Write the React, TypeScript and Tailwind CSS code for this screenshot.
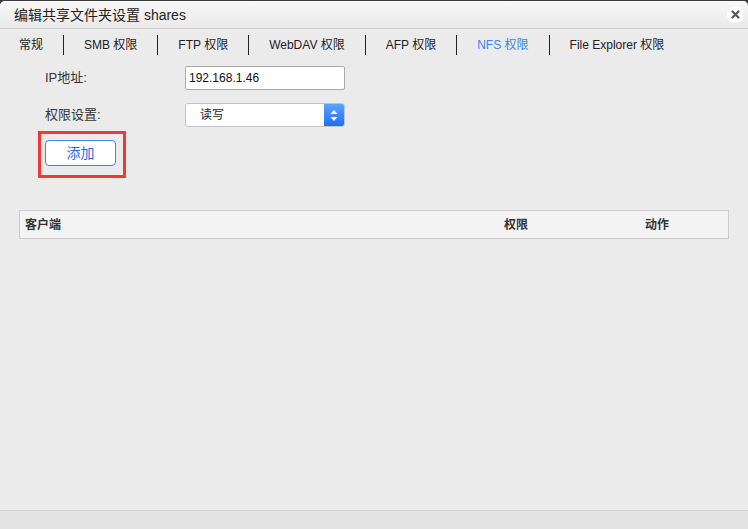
import React from 'react';

const tabs = ['常规', 'SMB 权限', 'FTP 权限', 'WebDAV 权限', 'AFP 权限', 'NFS 权限', 'File Explorer 权限'];

export default function App() {
  return (
    <div
      className="flex h-[529px] w-[748px] flex-col overflow-hidden bg-[#3a3a3a] text-[#333]"
      style={{ fontFamily: '"Liberation Sans", "Noto Sans CJK SC", sans-serif' }}
    >
      <div className="flex h-full flex-col overflow-hidden rounded-t-[5px] bg-[#ebebeb] mt-px">
        {/* Title bar */}
        <div className="flex h-[28px] shrink-0 items-center justify-between border-b border-[#cfcfcf] bg-gradient-to-b from-[#f8f8f8] to-[#e9e9e9] pl-[14px] pr-[4px]">
          <span className="text-[14px] leading-none text-[#222]">编辑共享文件夹设置 shares</span>
          <span className="flex h-[17px] w-[17px] items-center justify-center rounded-full bg-white">
            <svg width="9" height="9" viewBox="0 0 9 9">
              <path d="M1.5 1.5 L7.5 7.5 M7.5 1.5 L1.5 7.5" stroke="#555" strokeWidth="2.2" strokeLinecap="round" />
            </svg>
          </span>
        </div>

        {/* Tabs */}
        <div className="flex h-[31px] shrink-0 items-center pl-[19px] text-[12px]">
          {tabs.map((t, i) => (
            <React.Fragment key={t}>
              {i > 0 && <span className="mx-[20px] h-[20px] w-px bg-[#222]" />}
              <span className={t === 'NFS 权限' ? 'text-[#3b82f0]' : 'text-[#222]'}>{t}</span>
            </React.Fragment>
          ))}
        </div>

        {/* Form */}
        <div className="flex flex-col pl-[45px] pt-[6px] text-[13px]">
          <div className="flex h-[24px] items-center">
            <span className="w-[140px]">IP地址:</span>
            <div className="flex h-[24px] w-[160px] items-center rounded-[2px] border border-[#a9a9a9] bg-white pl-[3px] text-[12px] text-[#111]">
              192.168.1.46
            </div>
          </div>
          <div className="mt-[13px] flex h-[24px] items-center">
            <span className="w-[140px]">权限设置:</span>
            <div className="flex h-[24px] w-[160px] items-center overflow-hidden rounded-[3px] border border-[#c4c4c4] bg-white text-[12px] text-[#222]">
              <span className="flex-1 pl-[14px]">读写</span>
              <span className="flex h-full w-[20px] items-center justify-center bg-gradient-to-b from-[#5ba3ff] to-[#1c6ff2]">
                <svg width="8" height="13" viewBox="0 0 8 13">
                  <path d="M4 1 L7.5 5 H0.5 Z M4 12 L7.5 8 H0.5 Z" fill="#fff" />
                </svg>
              </span>
            </div>
          </div>
          <div className="-ml-[7px] mt-[4px] flex h-[47px] w-[88px] items-start justify-start border-[3px] border-[#f03838] pl-[4px] pt-[6px]">
            <button className="flex h-[26px] w-[71px] items-center justify-center rounded-[4px] border border-[#3f83f5] bg-white text-[14px] text-[#2f66e0]">
              添加
            </button>
          </div>
        </div>

        {/* Table header */}
        <div className="mx-[19px] mt-[32px] flex h-[29px] items-center border border-[#cccccc] bg-[#f3f3f3] text-[12px] font-bold text-[#333]">
          <span className="flex-1 pl-[5px]">客户端</span>
          <span className="w-[141px]">权限</span>
          <span className="w-[83px]">动作</span>
        </div>

        <div className="flex-1" />

        {/* Footer */}
        <div className="h-[19px] shrink-0 border-t border-[#d3d3d3] bg-[#e3e3e3]" />
      </div>
    </div>
  );
}
